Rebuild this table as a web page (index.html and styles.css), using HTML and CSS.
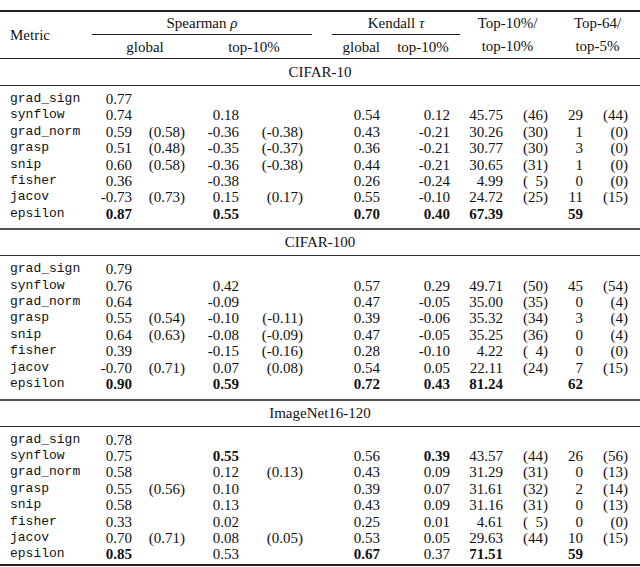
FILE: index.html
```html
<!DOCTYPE html>
<html>
<head>
<meta charset="utf-8">
<link rel="stylesheet" href="styles.css">
</head>
<body>
<table class="tbl">
<colgroup>
<col class="w1"><col class="w2"><col class="w3"><col class="w4"><col class="w5"><col class="w6"><col class="w7"><col class="w8"><col class="w9"><col class="w10"><col class="w11">
</colgroup>
<thead>
<tr class="h1">
<th class="metric" rowspan="2">Metric</th>
<th colspan="4"><div class="cm cm-sp">Spearman <i>ρ</i></div></th>
<th colspan="2"><div class="cm cm-kd">Kendall <i>τ</i></div></th>
<th colspan="2" rowspan="2" class="two">Top-10%/<br>top-10%</th>
<th colspan="2" rowspan="2" class="two">Top-64/<br>top-5%</th>
</tr>
<tr class="h2">
<th colspan="2" class="sp-g">global</th>
<th colspan="2" class="sp-t">top-10%</th>
<th class="kd-g">global</th>
<th class="kd-t">top-10%</th>
</tr>
</thead>
<tbody>
<tr class="title first-title"><td colspan="11">CIFAR-10</td></tr>
<tr class="d first"><td>grad_sign</td><td>0.77</td><td></td><td></td><td></td><td></td><td></td><td></td><td></td><td></td><td></td></tr>
<tr class="d"><td>synflow</td><td>0.74</td><td></td><td>0.18</td><td></td><td>0.54</td><td>0.12</td><td>45.75</td><td>(46)</td><td>29</td><td>(44)</td></tr>
<tr class="d"><td>grad_norm</td><td>0.59</td><td>(0.58)</td><td>-0.36</td><td>(-0.38)</td><td>0.43</td><td>-0.21</td><td>30.26</td><td>(30)</td><td>1</td><td>(0)</td></tr>
<tr class="d"><td>grasp</td><td>0.51</td><td>(0.48)</td><td>-0.35</td><td>(-0.37)</td><td>0.36</td><td>-0.21</td><td>30.77</td><td>(30)</td><td>3</td><td>(0)</td></tr>
<tr class="d"><td>snip</td><td>0.60</td><td>(0.58)</td><td>-0.36</td><td>(-0.38)</td><td>0.44</td><td>-0.21</td><td>30.65</td><td>(31)</td><td>1</td><td>(0)</td></tr>
<tr class="d"><td>fisher</td><td>0.36</td><td></td><td>-0.38</td><td></td><td>0.26</td><td>-0.24</td><td>4.99</td><td>(&#8199;5)</td><td>0</td><td>(0)</td></tr>
<tr class="d"><td>jacov</td><td>-0.73</td><td>(0.73)</td><td>0.15</td><td>(0.17)</td><td>0.55</td><td>-0.10</td><td>24.72</td><td>(25)</td><td>11</td><td>(15)</td></tr>
<tr class="d last"><td>epsilon</td><td><b>0.87</b></td><td></td><td><b>0.55</b></td><td></td><td><b>0.70</b></td><td><b>0.40</b></td><td><b>67.39</b></td><td></td><td><b>59</b></td><td></td></tr>

<tr class="title"><td colspan="11">CIFAR-100</td></tr>
<tr class="d first"><td>grad_sign</td><td>0.79</td><td></td><td></td><td></td><td></td><td></td><td></td><td></td><td></td><td></td></tr>
<tr class="d"><td>synflow</td><td>0.76</td><td></td><td>0.42</td><td></td><td>0.57</td><td>0.29</td><td>49.71</td><td>(50)</td><td>45</td><td>(54)</td></tr>
<tr class="d"><td>grad_norm</td><td>0.64</td><td></td><td>-0.09</td><td></td><td>0.47</td><td>-0.05</td><td>35.00</td><td>(35)</td><td>0</td><td>(4)</td></tr>
<tr class="d"><td>grasp</td><td>0.55</td><td>(0.54)</td><td>-0.10</td><td>(-0.11)</td><td>0.39</td><td>-0.06</td><td>35.32</td><td>(34)</td><td>3</td><td>(4)</td></tr>
<tr class="d"><td>snip</td><td>0.64</td><td>(0.63)</td><td>-0.08</td><td>(-0.09)</td><td>0.47</td><td>-0.05</td><td>35.25</td><td>(36)</td><td>0</td><td>(4)</td></tr>
<tr class="d"><td>fisher</td><td>0.39</td><td></td><td>-0.15</td><td>(-0.16)</td><td>0.28</td><td>-0.10</td><td>4.22</td><td>(&#8199;4)</td><td>0</td><td>(0)</td></tr>
<tr class="d"><td>jacov</td><td>-0.70</td><td>(0.71)</td><td>0.07</td><td>(0.08)</td><td>0.54</td><td>0.05</td><td>22.11</td><td>(24)</td><td>7</td><td>(15)</td></tr>
<tr class="d last"><td>epsilon</td><td><b>0.90</b></td><td></td><td><b>0.59</b></td><td></td><td><b>0.72</b></td><td><b>0.43</b></td><td><b>81.24</b></td><td></td><td><b>62</b></td><td></td></tr>

<tr class="title"><td colspan="11">ImageNet16-120</td></tr>
<tr class="d first"><td>grad_sign</td><td>0.78</td><td></td><td></td><td></td><td></td><td></td><td></td><td></td><td></td><td></td></tr>
<tr class="d"><td>synflow</td><td>0.75</td><td></td><td><b>0.55</b></td><td></td><td>0.56</td><td><b>0.39</b></td><td>43.57</td><td>(44)</td><td>26</td><td>(56)</td></tr>
<tr class="d"><td>grad_norm</td><td>0.58</td><td></td><td>0.12</td><td>(0.13)</td><td>0.43</td><td>0.09</td><td>31.29</td><td>(31)</td><td>0</td><td>(13)</td></tr>
<tr class="d"><td>grasp</td><td>0.55</td><td>(0.56)</td><td>0.10</td><td></td><td>0.39</td><td>0.07</td><td>31.61</td><td>(32)</td><td>2</td><td>(14)</td></tr>
<tr class="d"><td>snip</td><td>0.58</td><td></td><td>0.13</td><td></td><td>0.43</td><td>0.09</td><td>31.16</td><td>(31)</td><td>0</td><td>(13)</td></tr>
<tr class="d"><td>fisher</td><td>0.33</td><td></td><td>0.02</td><td></td><td>0.25</td><td>0.01</td><td>4.61</td><td>(&#8199;5)</td><td>0</td><td>(0)</td></tr>
<tr class="d"><td>jacov</td><td>0.70</td><td>(0.71)</td><td>0.08</td><td>(0.05)</td><td>0.53</td><td>0.05</td><td>29.63</td><td>(44)</td><td>10</td><td>(15)</td></tr>
<tr class="d last end"><td>epsilon</td><td><b>0.85</b></td><td></td><td>0.53</td><td></td><td><b>0.67</b></td><td>0.37</td><td><b>71.51</b></td><td></td><td><b>59</b></td><td></td></tr>
</tbody>
</table>
</body>
</html>
```

FILE: styles.css
```css
html, body {
  margin: 0;
  padding: 0;
  background: #fff;
}
body {
  color: #111;
  font-family: "Liberation Serif", "Times New Roman", serif;
  font-size: 15px;
}
.tbl {
  margin-top: 10px;
  width: 640px;
  table-layout: fixed;
  border-collapse: separate;
  border-spacing: 0;
}
.w1 { width: 92px; }
.w2 { width: 48px; }
.w3 { width: 50px; }
.w4 { width: 56px; }
.w5 { width: 86px; }
.w6 { width: 54px; }
.w7 { width: 74px; }
.w8 { width: 50px; }
.w9 { width: 45px; }
.w10 { width: 35px; }
.w11 { width: 50px; }

th, td {
  padding: 0;
  font-weight: normal;
  white-space: nowrap;
}
b { font-weight: bold; }

/* header */
.h1 th {
  border-top: 2px solid #222;
  line-height: 22px;
  text-align: center;
  vertical-align: top;
}
.h1 th.metric {
  text-align: left;
  padding-left: 10px;
  vertical-align: middle;
  border-bottom: 1px solid #222;
}
.h1 th.two {
  vertical-align: middle;
  line-height: 23px;
  border-bottom: 1px solid #222;
}
.cm {
  border-bottom: 1px solid #222;
}
.cm-sp { margin-right: 20px; }
.cm-kd { margin-left: 0; }
.h2 th {
  line-height: 22px;
  border-bottom: 1px solid #222;
  text-align: center;
}
.h2 .sp-g { padding-left: 8px; }
.h2 .sp-t { padding-right: 14px; }
.h2 .kd-g { text-align: right; padding-right: 6px; }

/* section titles */
.title td {
  text-align: center;
  line-height: 25px;
  border-top: 2px solid #555;
  border-bottom: 1px solid #333;
}
.first-title td {
  border-top: none;
  line-height: 26px;
}

/* data rows */
.d td {
  line-height: 16.4px;
  text-align: right;
}
.d td:nth-child(1) {
  text-align: left;
  padding-left: 10px;
  font-family: "Liberation Mono", "Courier New", monospace;
  font-size: 13px;
}
.d td:nth-child(2) { padding-right: 8px; }
.d td:nth-child(3) { padding-right: 5px; }
.d td:nth-child(4) { padding-right: 7px; }
.d td:nth-child(5) { padding-right: 29px; }
.d td:nth-child(6) { padding-right: 6px; }
.d td:nth-child(7) { padding-right: 10px; }
.d td:nth-child(8) { padding-right: 7px; }
.d td:nth-child(9) { padding-right: 7px; }
.d td:nth-child(10) { padding-right: 7px; }
.d td:nth-child(11) { padding-right: 12px; }
.d.first td { padding-top: 5px; }
.d.last td { padding-bottom: 6px; }
.d.end td {
  padding-bottom: 1px;
  border-bottom: 2px solid #222;
}
```
